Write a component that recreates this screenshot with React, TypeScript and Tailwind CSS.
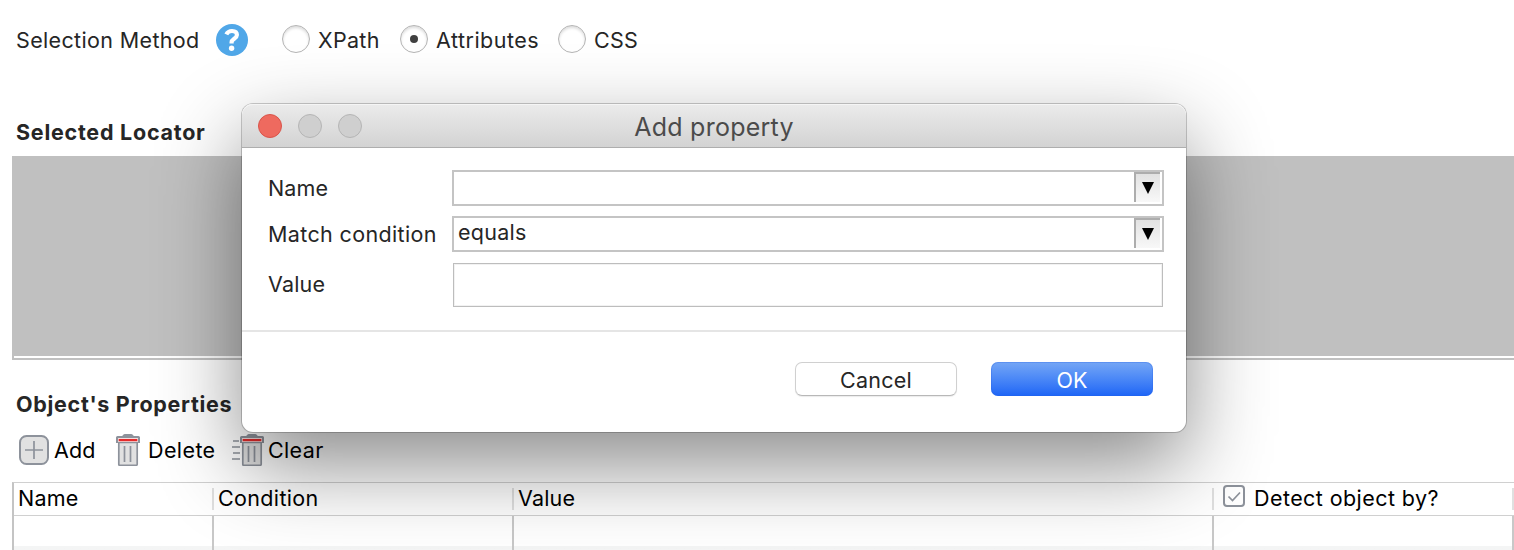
import React from "react";

function HelpIcon() {
  return (
    <svg width="32" height="32" viewBox="0 0 32 32" className="shrink-0">
      <circle cx="16" cy="16" r="16" fill="#50a7e8" />
      <path d="M10.300 10.400C11.500 8 13.600 7 16 7c3.200 0 4.900 1.700 4.900 4 0 3.600-5.300 3.900-5.300 7.300v1.300" fill="none" stroke="#fff" strokeWidth="4.200" />
      <circle cx="15.600" cy="24.200" r="2.700" fill="#fff" />
    </svg>
  );
}

function Radio({ checked = false }: { checked?: boolean }) {
  return (
    <span className="mb-0.5 flex size-7 shrink-0 items-center justify-center rounded-full border border-[#b4b4b4] bg-white shadow-[inset_0_2px_3px_rgba(0,0,0,0.14)]">
      {checked && <span className="size-2 rounded-full bg-[#404040]" />}
    </span>
  );
}

function AddIcon() {
  return (
    <svg width="30" height="30" viewBox="0 0 30 30" className="shrink-0">
      <rect x="1" y="1" width="28" height="28" rx="6.500" fill="#e1e1e1" stroke="#8d929b" strokeWidth="2" />
      <path d="M15 6v18M6 15h18" stroke="#8d929b" strokeWidth="1.700" />
    </svg>
  );
}

function TrashShape() {
  return (
    <>
      <path d="M2.800 8.500h18.400V30.300q0 1-1 1H3.800q-1 0-1-1z" fill="#e1e1e1" stroke="#8d929b" strokeWidth="1.700" />
      <path d="M7 1.200Q7.500 0 9 0h6q1.500 0 2 1.200L18 2h4.500Q24 2 24 3.500V9H0V3.500Q0 2 1.500 2H6z" fill="#8d929b" />
      <path d="M2 4h20v4H2z" fill="#f3dede" />
      <path d="M2.700 5h18.600v2.200H2.700z" fill="#e62a2a" />
      <path d="M8.500 12v16M14.500 12v16" stroke="#8d929b" strokeWidth="1.700" />
    </>
  );
}

function DeleteIcon() {
  return (
    <svg width="24" height="32" viewBox="0 0 24 32" className="shrink-0">
      <TrashShape />
    </svg>
  );
}

function ClearIcon() {
  return (
    <svg width="32" height="32" viewBox="0 0 32 32" className="shrink-0">
      <path d="M1 7h6M0 13h8M1 19h7M0 25h8" stroke="#8d929b" strokeWidth="1.700" />
      <g transform="translate(8 0)">
        <TrashShape />
      </g>
    </svg>
  );
}

function Combo({ text }: { text: string }) {
  return (
    <div className="flex h-9 w-[712px] items-start border-2 border-[#c4c4c4] bg-white">
      <span className="flex-1 pl-1 leading-[28px] tracking-[0.25px]">{text}</span>
      <span className="flex h-[30px] w-[26px] items-center justify-center border-t-2 border-l-2 border-[#adadad] bg-linear-to-b from-[#e2e2e2] to-[#f8f8f8]">
        <svg width="12" height="12" viewBox="0 0 12 12">
          <path d="M0 0h12L6 12z" fill="#000" />
        </svg>
      </span>
      <span className="w-0.5" />
    </div>
  );
}

function Divider() {
  return <span className="h-[22px] w-0.5 shrink-0 bg-[#e0e0e0]" />;
}

function Dialog() {
  return (
    <div className="absolute top-[104px] left-[242px] flex h-[328px] w-[944px] flex-col overflow-visible rounded-[11px] bg-white shadow-[0_0_0_1px_rgba(0,0,0,0.2),0_33px_84px_rgba(0,0,0,0.46)]">
      <div className="grid h-11 shrink-0 grid-cols-[1fr_auto_1fr] items-center rounded-t-[11px] border-b border-[#aeaeae] bg-linear-to-b from-[#ebebeb] to-[#d3d3d3] px-4 shadow-[inset_0_1px_0_#f5f5f5]">
        <div className="flex gap-4 pt-px">
          <span className="size-6 rounded-full border border-[#d9544a] bg-[#ee6a5f]" />
          <span className="size-6 rounded-full border border-[#b5b5b5] bg-[#cfcfcf]" />
          <span className="size-6 rounded-full border border-[#b5b5b5] bg-[#cfcfcf]" />
        </div>
        <span className="pt-[3px] text-[25px] leading-8 tracking-[0.25px] text-[#4b4b4b]">Add property</span>
        <span />
      </div>
      <div className="flex h-[184px] shrink-0 flex-col border-b-2 border-[#e5e5e5] pt-[22px] pl-[26px]">
        <div className="flex h-9 items-center">
          <span className="w-[184px] tracking-[0.1px]">Name</span>
          <Combo text="" />
        </div>
        <div className="mt-2.5 flex h-9 items-center">
          <span className="w-[184px] whitespace-nowrap tracking-[0.36px]">Match condition</span>
          <Combo text="equals" />
        </div>
        <div className="mt-[11px] flex h-11 items-center">
          <span className="w-[185px] pb-0.5 tracking-[0.2px]">Value</span>
          <div className="h-11 w-[710px] border border-[#bdbdbd] bg-white shadow-[inset_0_0_0_1px_#f2f2f2]" />
        </div>
      </div>
      <div className="flex justify-end gap-[34px] pt-[30px] pr-[33px]">
        <button className="flex h-[34px] w-[162px] items-start justify-center rounded-[7px] border border-[#d0d0d0] border-b-[#b8b8b8] bg-white pt-px leading-8 tracking-[0.25px] shadow-[0_1px_1px_rgba(0,0,0,0.08)]">Cancel</button>
        <button className="h-[34px] w-[162px] rounded-[7px] bg-linear-to-b from-[#75a6f5] to-[#1d64f6] pt-0.5 leading-8 text-white shadow-[inset_0_0_0_1px_rgba(40,100,230,0.3)]">OK</button>
      </div>
    </div>
  );
}

export default function App() {
  return (
    <div className="relative h-[550px] w-[1514px] overflow-hidden bg-white font-['Inter',sans-serif] text-[21.5px] leading-7 text-[#262626]">
      <div className="flex h-20 items-center pl-4">
        <span className="w-[200px] whitespace-nowrap tracking-[0.35px]">Selection Method</span>
        <HelpIcon />
        <div className="ml-[34px] flex w-[118px] items-center gap-2">
          <Radio />
          <span className="tracking-[0.3px]">XPath</span>
        </div>
        <div className="flex w-[158px] items-center gap-2">
          <Radio checked />
          <span className="tracking-[0.5px]">Attributes</span>
        </div>
        <div className="flex items-center gap-2">
          <Radio />
          <span className="tracking-[0.2px]">CSS</span>
        </div>
      </div>

      <div className="mt-[38px] pl-4 font-bold tracking-[0.75px]">Selected Locator</div>
      <div className="mt-2.5 ml-3 h-[204px] border-2 border-r-0 border-[#c0c0c0] pb-0.5">
        <div className="h-full bg-[#c0c0c0]" />
      </div>

      <div className="mt-[30px] pl-4 font-bold tracking-[0.7px]">Object's Properties</div>
      <div className="mt-[14px] flex h-9 items-center pl-[19px] text-black">
        <AddIcon />
        <span className="ml-[5px] w-[62px] tracking-[0.1px]">Add</span>
        <DeleteIcon />
        <span className="ml-2 w-[84px] tracking-[0.4px]">Delete</span>
        <ClearIcon />
        <span className="ml-1 tracking-[0.35px]">Clear</span>
      </div>

      <div className="mt-[14px] ml-3 w-[1502px] border-t border-l-2 border-t-[#d0d0d0] border-l-[#c4c4c4] text-black">
        <div className="flex h-[33px] items-center border-b border-[#d0d0d0]">
          <span className="w-[198px] pb-0.5 pl-1 tracking-[0.2px]">Name</span>
          <Divider />
          <span className="w-[298px] pb-0.5 pl-1 tracking-[0.35px]">Condition</span>
          <Divider />
          <span className="w-[698px] pb-0.5 pl-1 tracking-[0.2px]">Value</span>
          <Divider />
          <div className="flex w-[298px] items-center pb-0.5 pl-[9px]">
            <svg width="22" height="22" viewBox="0 0 22 22" className="-mt-1 shrink-0">
              <rect x="1" y="1" width="20" height="20" rx="3" fill="#fff" stroke="#8d929b" strokeWidth="2" />
              <path d="M5.500 11.500l4 4L17 7.500" fill="none" stroke="#8d929b" strokeWidth="1.700" />
            </svg>
            <span className="ml-[9px] whitespace-nowrap tracking-[0.42px]">Detect object by?</span>
          </div>
          <Divider />
        </div>
        <div className="grid h-[34px] grid-cols-[200px_300px_700px_300px] bg-linear-to-b from-white from-[30px] to-[#f4f5f5] to-[30px]">
          <span className="border-r-2 border-[#c8c8c8]" />
          <span className="border-r-2 border-[#c8c8c8]" />
          <span className="border-r-2 border-[#c8c8c8]" />
          <span className="border-r-2 border-[#c8c8c8]" />
        </div>
      </div>

      <Dialog />
    </div>
  );
}
